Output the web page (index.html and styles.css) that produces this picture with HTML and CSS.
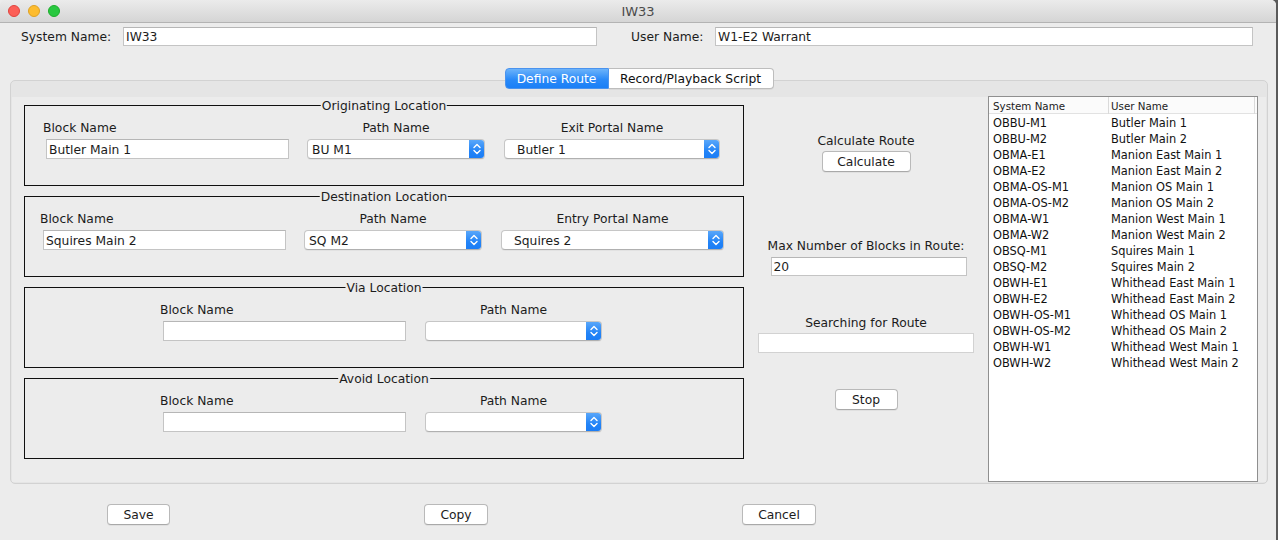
FILE: index.html
```html
<!DOCTYPE html>
<html>
<head>
<meta charset="utf-8">
<title>IW33</title>
<link rel="stylesheet" href="styles.css">
</head>
<body>
<div class="window">
  <div class="titlebar">
    <div class="lights">
      <span class="light red"></span><span class="light yellow"></span><span class="light green"></span>
    </div>
    <div class="title">IW33</div>
    <div></div>
  </div>

  <div class="names">
    <div class="name-label sys-label">System Name:</div>
    <div class="field sys-field">IW33</div>
    <div class="name-label user-label">User Name:</div>
    <div class="field user-field">W1-E2 Warrant</div>
  </div>

  <div class="tabs">
    <div class="tab active">Define Route</div>
    <div class="tab">Record/Playback Script</div>
  </div>

  <div class="pane">
    <div class="pane-inner">
      <div class="groups">
        <div class="group g-orig">
          <span class="legend">Originating Location</span>
          <div class="col c-block">
            <div class="lbl">Block Name</div>
            <div class="field">Butler Main 1</div>
          </div>
          <div class="col c-path">
            <div class="lbl">Path Name</div>
            <div class="combo pad-s"><span class="combo-text">BU M1</span><span class="combo-btn"><svg width="16" height="20" viewBox="0 0 16 20"><path d="M5 8.5 L8 5.5 L11 8.5 M5 11.5 L8 14.5 L11 11.5" fill="none" stroke="#fff" stroke-width="1.4" stroke-linecap="round" stroke-linejoin="round"/></svg></span></div>
          </div>
          <div class="col c-portal">
            <div class="lbl">Exit Portal Name</div>
            <div class="combo pad-l"><span class="combo-text">Butler 1</span><span class="combo-btn"><svg width="16" height="20" viewBox="0 0 16 20"><path d="M5 8.5 L8 5.5 L11 8.5 M5 11.5 L8 14.5 L11 11.5" fill="none" stroke="#fff" stroke-width="1.4" stroke-linecap="round" stroke-linejoin="round"/></svg></span></div>
          </div>
        </div>

        <div class="group g-dest">
          <span class="legend">Destination Location</span>
          <div class="col c-block">
            <div class="lbl">Block Name</div>
            <div class="field">Squires Main 2</div>
          </div>
          <div class="col c-path">
            <div class="lbl">Path Name</div>
            <div class="combo pad-s"><span class="combo-text">SQ M2</span><span class="combo-btn"><svg width="16" height="20" viewBox="0 0 16 20"><path d="M5 8.5 L8 5.5 L11 8.5 M5 11.5 L8 14.5 L11 11.5" fill="none" stroke="#fff" stroke-width="1.4" stroke-linecap="round" stroke-linejoin="round"/></svg></span></div>
          </div>
          <div class="col c-portal wide">
            <div class="lbl">Entry Portal Name</div>
            <div class="combo pad-l"><span class="combo-text">Squires 2</span><span class="combo-btn"><svg width="16" height="20" viewBox="0 0 16 20"><path d="M5 8.5 L8 5.5 L11 8.5 M5 11.5 L8 14.5 L11 11.5" fill="none" stroke="#fff" stroke-width="1.4" stroke-linecap="round" stroke-linejoin="round"/></svg></span></div>
          </div>
        </div>

        <div class="group g-via">
          <span class="legend">Via Location</span>
          <div class="col c-block">
            <div class="lbl">Block Name</div>
            <div class="field"></div>
          </div>
          <div class="col c-path narrow">
            <div class="lbl">Path Name</div>
            <div class="combo pad-s"><span class="combo-text"></span><span class="combo-btn"><svg width="16" height="20" viewBox="0 0 16 20"><path d="M5 8.5 L8 5.5 L11 8.5 M5 11.5 L8 14.5 L11 11.5" fill="none" stroke="#fff" stroke-width="1.4" stroke-linecap="round" stroke-linejoin="round"/></svg></span></div>
          </div>
        </div>

        <div class="group g-via">
          <span class="legend">Avoid Location</span>
          <div class="col c-block">
            <div class="lbl">Block Name</div>
            <div class="field"></div>
          </div>
          <div class="col c-path narrow">
            <div class="lbl">Path Name</div>
            <div class="combo pad-s"><span class="combo-text"></span><span class="combo-btn"><svg width="16" height="20" viewBox="0 0 16 20"><path d="M5 8.5 L8 5.5 L11 8.5 M5 11.5 L8 14.5 L11 11.5" fill="none" stroke="#fff" stroke-width="1.4" stroke-linecap="round" stroke-linejoin="round"/></svg></span></div>
          </div>
        </div>
      </div>

      <div class="middle">
        <div class="mlbl m-calc">Calculate Route</div>
        <div class="btn b-calc">Calculate</div>
        <div class="mlbl m-max">Max Number of Blocks in Route:</div>
        <div class="field f-max">20</div>
        <div class="mlbl m-search">Searching for Route</div>
        <div class="field f-search"></div>
        <div class="btn b-stop">Stop</div>
      </div>

      <div class="table">
        <div class="thead">
          <div class="th th1">System Name</div>
          <div class="th th2">User Name</div>
        </div>
        <div class="tbody">
          <div class="td c1">OBBU-M1</div><div class="td c2">Butler Main 1</div>
          <div class="td c1">OBBU-M2</div><div class="td c2">Butler Main 2</div>
          <div class="td c1">OBMA-E1</div><div class="td c2">Manion East Main 1</div>
          <div class="td c1">OBMA-E2</div><div class="td c2">Manion East Main 2</div>
          <div class="td c1">OBMA-OS-M1</div><div class="td c2">Manion OS Main 1</div>
          <div class="td c1">OBMA-OS-M2</div><div class="td c2">Manion OS Main 2</div>
          <div class="td c1">OBMA-W1</div><div class="td c2">Manion West Main 1</div>
          <div class="td c1">OBMA-W2</div><div class="td c2">Manion West Main 2</div>
          <div class="td c1">OBSQ-M1</div><div class="td c2">Squires Main 1</div>
          <div class="td c1">OBSQ-M2</div><div class="td c2">Squires Main 2</div>
          <div class="td c1">OBWH-E1</div><div class="td c2">Whithead East Main 1</div>
          <div class="td c1">OBWH-E2</div><div class="td c2">Whithead East Main 2</div>
          <div class="td c1">OBWH-OS-M1</div><div class="td c2">Whithead OS Main 1</div>
          <div class="td c1">OBWH-OS-M2</div><div class="td c2">Whithead OS Main 2</div>
          <div class="td c1">OBWH-W1</div><div class="td c2">Whithead West Main 1</div>
          <div class="td c1">OBWH-W2</div><div class="td c2">Whithead West Main 2</div>
        </div>
      </div>
    </div>
  </div>

  <div class="buttons">
    <div class="btn b-save">Save</div>
    <div class="btn b-copy">Copy</div>
    <div class="btn b-cancel">Cancel</div>
  </div>
</div>
</body>
</html>
```

FILE: styles.css
```css
* { box-sizing: border-box; }

html, body {
  margin: 0;
  padding: 0;
}

body {
  background: #5a5a5a;
  font-family: "DejaVu Sans", "Liberation Sans", sans-serif;
  font-size: 12.3px;
  color: #1c1c1c;
  width: 1278px;
  height: 540px;
  overflow: hidden;
}

.window {
  width: 1276px;
  height: 540px;
  background: #ececec;
  border-top-right-radius: 5px;
}

/* title bar */
.titlebar {
  height: 23px;
  display: grid;
  grid-template-columns: 1fr auto 1fr;
  align-items: center;
  background: linear-gradient(#ebebeb, #d5d5d5);
  border-bottom: 1px solid #b3b3b3;
  border-top-right-radius: 5px;
  border-top-left-radius: 5px;
}

.lights {
  display: flex;
  gap: 8px;
  padding-left: 8px;
  padding-bottom: 1px;
}

.light {
  width: 12px;
  height: 12px;
  border-radius: 50%;
  display: block;
}
.light.red { background: #fc5f57; border: 1px solid #e0443e; }
.light.yellow { background: #fdbc2e; border: 1px solid #dea123; }
.light.green { background: #29c840; border: 1px solid #1dad2b; }

.title {
  font-size: 13px;
  color: #4b4b4b;
  padding-top: 1px;
}

/* name row */
.names {
  display: flex;
  align-items: center;
  padding: 4px 0 0 21px;
  height: 23px;
}

.name-label { line-height: 21px; height: 19px; }
.sys-label { width: 102px; }
.user-label { width: 84px; margin-left: 34px; }

.field {
  height: 20px;
  background: #fff;
  border: 1px solid #c4c4c4;
  border-top-color: #b6b6b6;
  padding-left: 2px;
  line-height: 20px;
  white-space: nowrap;
  overflow: hidden;
}

.sys-field { width: 474px; height: 19px; line-height: 19px; }
.user-field { width: 538px; height: 19px; line-height: 19px; }

/* tabs */
.tabs {
  display: flex;
  justify-content: center;
  margin-top: 22px;
  margin-bottom: -9px;
  position: relative;
  z-index: 1;
  padding-left: 2px;
}

.tab {
  height: 21px;
  line-height: 20px;
  padding: 0 7px;
  background: #fff;
  border: 1px solid #bdbdbd;
  color: #111;
  font-size: 12.3px;
}
.tab:first-child {
  border-radius: 4px 0 0 4px;
  width: 104px;
  text-align: center;
}
.tab:last-child {
  border-radius: 0 4px 4px 0;
  border-left: none;
  width: 165px;
  text-align: center;
  box-shadow: 0 1px 0 rgba(0,0,0,0.05);
}
.tab.active {
  background: linear-gradient(#6cb3fa, #2a8af8 55%, #1a7ff6);
  border-color: #4a93ee;
  color: #fff;
}

/* pane */
.pane {
  margin: 0 8px 0 10px;
  border: 1px solid #d2d2d2;
  border-radius: 5px;
  background: #e5e5e5;
  padding: 16px 1px 1px 1px;
}

.pane-inner {
  height: 385px;
  background: #ececec;
  display: flex;
  padding-left: 12px;
}

.groups {
  width: 720px;
  display: flex;
  flex-direction: column;
  gap: 10px;
  padding-top: 8px;
}

.group {
  position: relative;
  height: 81px;
  border: 1px solid #101010;
  display: flex;
  align-items: flex-start;
  padding-top: 14px;
}

.legend {
  position: absolute;
  top: -8px;
  left: 50%;
  transform: translateX(-50%);
  background: #ececec;
  padding: 0 1px;
  line-height: 16px;
  white-space: nowrap;
}

.col {
  display: flex;
  flex-direction: column;
}

.lbl {
  line-height: 17px;
  height: 17px;
  margin-bottom: 2px;
  white-space: nowrap;
}

.c-block { width: 246px; }
.c-block .field { margin-left: 3px; width: 243px; }

.c-path { width: 178px; margin-left: 18px; text-align: center; }
.c-path.narrow { width: 177px; margin-left: 19px; }
.c-portal { width: 216px; margin-left: 19px; text-align: center; }
.c-portal.wide { width: 223px; }

.g-orig { padding-left: 18px; }
.g-dest { padding-left: 15px; }
.g-via { padding-left: 135px; }

.combo {
  height: 20px;
  display: flex;
  background: #fff;
  border: 1px solid #c6c6c6;
  border-bottom-color: #b0b0b0;
  border-radius: 4px;
  text-align: left;
  overflow: hidden;
  box-shadow: 0 1px 0 rgba(0,0,0,0.04);
}

.combo-text {
  flex: 1;
  line-height: 20px;
  white-space: nowrap;
}
.pad-s .combo-text { padding-left: 4px; }
.pad-l .combo-text { padding-left: 12px; }

.combo-btn {
  width: 16px;
  margin: -1px -1px -1px 0;
  height: 20px;
  background: linear-gradient(#5eaafa, #2384f7 60%, #1a7cf5);
  border-radius: 0 4px 4px 0;
  display: block;
}
.combo-btn svg { display: block; }

/* middle column */
.middle {
  width: 244px;
  display: flex;
  flex-direction: column;
  align-items: center;
  padding-top: 36px;
}

.mlbl {
  line-height: 17px;
  height: 15px;
  white-space: nowrap;
}

.btn {
  height: 21px;
  line-height: 20px;
  text-align: center;
  background: #fff;
  border: 1px solid #b9b9b9;
  border-bottom-color: #a9a9a9;
  border-radius: 4px;
  box-shadow: 0 1px 0 rgba(0,0,0,0.05);
  font-size: 12.3px;
}

.b-calc { width: 89px; margin-top: 3px; }
.m-max { margin-top: 66px; }
.f-max { width: 196px; height: 19px; line-height: 19px; margin-top: 4px; margin-left: 5px; }
.m-search { margin-top: 39px; }
.f-search { width: 216px; margin-top: 3px; border-color: #d2d2d2; }
.b-stop { width: 63px; margin-top: 36px; }

/* table */
.table {
  width: 270px;
  height: 386px;
  margin-top: -1px;
  background: #fff;
  border: 1px solid #8f8f8f;
  font-size: 11.4px;
}

.thead {
  display: grid;
  grid-template-columns: 120px 146px;
  height: 17px;
  border-bottom: 1px solid #e2e2e2;
  background: #fbfbfb;
}

.th {
  font-size: 10.3px;
  line-height: 16px;
  padding-top: 1px;
  color: #222;
  white-space: nowrap;
}
.th1 { padding-left: 4px; border-right: 1px solid #dadada; }
.th2 { padding-left: 2px; border-right: 1px solid #dadada; }

.tbody {
  display: grid;
  grid-template-columns: 120px 1fr;
  grid-auto-rows: 16px;
}

.td {
  line-height: 16px;
  padding-top: 1px;
  white-space: nowrap;
  color: #111;
}
.td.c1 { padding-left: 4px; }
.td.c2 { padding-left: 2px; }

/* bottom buttons */
.buttons {
  display: flex;
  gap: 254px;
  padding-left: 107px;
  margin-top: 20px;
}

.b-save { width: 63px; }
.b-copy { width: 64px; }
.b-cancel { width: 74px; }
```
